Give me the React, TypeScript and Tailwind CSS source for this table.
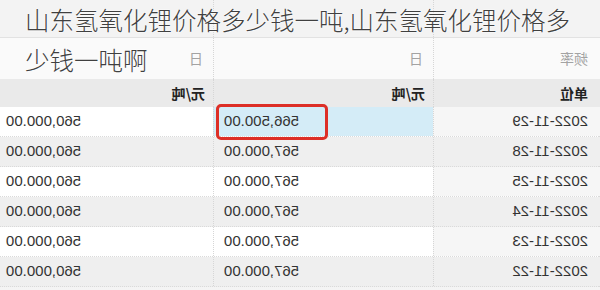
import React from "react";

type Row = { date: string; price: string; prev: string };

const rows: Row[] = [
  { date: "2022-11-29", price: "566,500.00", prev: "560,000.00" },
  { date: "2022-11-28", price: "567,000.00", prev: "560,000.00" },
  { date: "2022-11-25", price: "567,000.00", prev: "560,000.00" },
  { date: "2022-11-24", price: "567,000.00", prev: "560,000.00" },
  { date: "2022-11-23", price: "567,000.00", prev: "560,000.00" },
  { date: "2022-11-22", price: "567,000.00", prev: "560,000.00" },
];

const cell = "flex items-center border-r border-dotted border-[#d6d6d6]";

const App = () => {
  return (
    <div
      className="relative w-[600px] h-[290px] overflow-hidden bg-[#f4f4f4]"
      style={{ fontFamily: '"Noto Sans CJK SC", "Liberation Sans", sans-serif' }}
    >
      {/* the table is shown flipped, as in the picture */}
      <div className="w-[600px] -scale-x-100 text-[#333]">
        <div className="grid grid-cols-[167px_220px_218px] h-[38px] bg-[#f3f3f3] border-b border-[#e2e2e2]">
          <div className={cell} />
          <div className={cell} />
          <div className={cell} />
        </div>
        <div className="grid grid-cols-[167px_220px_218px] h-[41px] bg-[#fafafa] text-[14px] text-[#a3a3a3]">
          <div className={`${cell} px-3`}>频率</div>
          <div className={`${cell} px-[10px]`}>日</div>
          <div className={`${cell} px-[10px]`}>日</div>
        </div>
        <div className="grid grid-cols-[167px_220px_218px] h-[28px] bg-[#eaeaea] text-[14px] font-bold text-[#222]">
          <div className={`${cell} px-3`}>单位</div>
          <div className={`${cell} px-[8px]`}>元/吨</div>
          <div className={`${cell} px-[8px]`}>元/吨</div>
        </div>
        {rows.map((r, i) => {
          const even = i % 2 === 1;
          return (
            <div
              key={r.date}
              className={`grid grid-cols-[167px_220px_218px] h-[30px] border-b border-dotted border-[#dadada] text-[15px] ${
                even ? "bg-[#efefef]" : "bg-white"
              }`}
              style={{ fontFamily: '"Liberation Sans", "Noto Sans CJK SC", sans-serif' }}
            >
              <div className={`${cell} px-3 ${even ? "" : "bg-[#f6f6f6]"}`}>{r.date}</div>
              <div
                className={`${cell} relative justify-end px-[10px] ${
                  i === 0 ? "bg-[#d4ecf7]" : ""
                }`}
              >
                {r.price}
                {i === 0 && (
                  <span className="absolute right-[2px] top-[-3px] w-[112px] h-[36px] rounded-[5px] border-[3px] border-[#dd2f27]" />
                )}
              </div>
              <div className={`${cell} justify-end px-[10px]`}>{r.prev}</div>
            </div>
          );
        })}
      </div>

      {/* caption over the picture */}
      <div
        className="absolute left-[25px] top-0 whitespace-nowrap text-[24.5px] font-light leading-[40px] text-[#404040]"
        style={{ textShadow: "0 0 2px #fff, 0 0 2px #fff" }}
      >
        <p>山东氢氧化锂价格多少钱一吨,山东氢氧化锂价格多</p>
        <p>少钱一吨啊</p>
      </div>
    </div>
  );
};

export default App;
